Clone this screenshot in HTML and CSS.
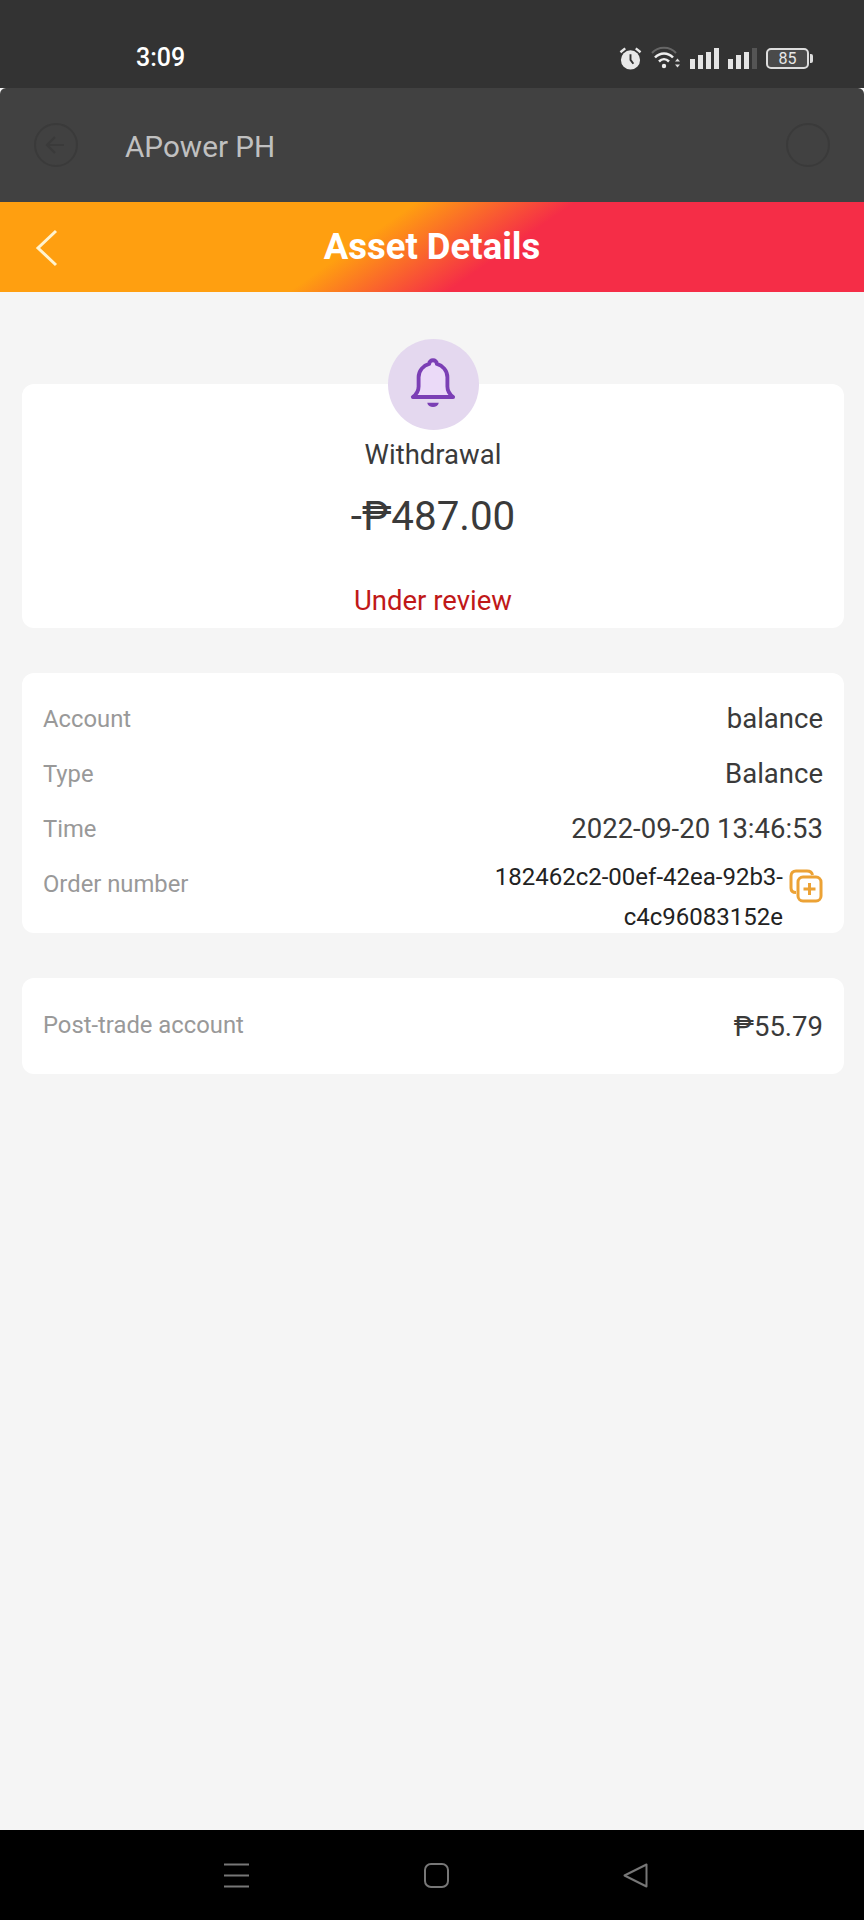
FILE: index.html
```html
<!DOCTYPE html>
<html lang="en">
<head>
    <meta charset="UTF-8">
    <meta name="viewport" content="width=device-width, initial-scale=1.0">
    <title>Asset Details</title>
    <link rel="stylesheet" href="styles.css">
</head>
<body>
    <div class="phone">
        <div class="status-bar">
            <span class="clock">3:09</span>
            <div class="status-icons">
                <svg class="ico-alarm" width="23" height="25" viewBox="0 0 24 26">
                    <circle cx="12" cy="14.500" r="10" fill="#e8e8e8"/>
                    <path d="M12 8.500v6l3 4" fill="none" stroke="#333" stroke-width="2"/>
                    <path d="M1.500 6.500l5-4M22.500 6.500l-5-4" stroke="#e8e8e8" stroke-width="2.500" fill="none"/>
                </svg>
                <svg class="ico-wifi" width="30" height="26" viewBox="0 0 30 26">
                    <path d="M1 8C7 1 19 1 25 8" fill="none" stroke="#666" stroke-width="2"/>
                    <path d="M4 12.500C9 7 17 7 22 12.500" fill="none" stroke="#eee" stroke-width="2.500"/>
                    <path d="M8 16.500C11 13.500 15 13.500 18 16.500" fill="none" stroke="#eee" stroke-width="2.500"/>
                    <circle cx="13" cy="21" r="2.200" fill="#eee"/>
                    <path d="M24 16.500l2.500-3 2.500 3zM24 19.500l2.500 3 2.500-3z" fill="#ddd"/>
                </svg>
                <div class="signal">
                    <i class="h1"></i><i class="h2"></i><i class="h3"></i><i class="h4"></i>
                </div>
                <div class="signal">
                    <i class="h1"></i><i class="h2"></i><i class="h3"></i><i class="h4 off"></i>
                </div>
                <div class="battery">
                    <div class="battery-body">85</div>
                    <div class="battery-tip"></div>
                </div>
            </div>
        </div>

        <div class="app-bar">
            <div class="app-left">
                <svg width="46" height="46" viewBox="0 0 46 46">
                    <circle cx="23" cy="23" r="21" fill="none" stroke="#3a3a3a" stroke-width="2"/>
                    <path d="M31 23H14M22 15l-8 8 8 8" fill="none" stroke="#3a3a3a" stroke-width="2"/>
                </svg>
                <span class="app-name">APower PH</span>
            </div>
            <svg width="46" height="46" viewBox="0 0 46 46">
                <circle cx="23" cy="23" r="21" fill="none" stroke="#3a3a3a" stroke-width="2"/>
            </svg>
        </div>

        <header class="page-head">
            <svg class="back" width="24" height="38" viewBox="0 0 24 38">
                <path d="M21 2L3 19l18 17" fill="none" stroke="#fff3cf" stroke-width="3"/>
            </svg>
            <h1>Asset Details</h1>
        </header>

        <main class="content">
            <section class="card summary">
                <div class="bell-wrap">
                    <svg width="48" height="54" viewBox="0 0 50 56">
                        <path d="M4 40.500h42c-4-3-6-6-6-11V20c0-7-5-12.500-11-14 0-5-8-5-8 0C15 7.500 10 13 10 20v9.500c0 5-2 8-6 11z" fill="#ebdaf8" stroke="#7b3fb5" stroke-width="4" stroke-linejoin="round"/>
                        <path d="M19 46.500h12c-1 6-11 6-12 0z" fill="#7b3fb5"/>
                    </svg>
                </div>
                <div class="kind">Withdrawal</div>
                <div class="amount">-₱487.00</div>
                <div class="state">Under review</div>
            </section>

            <section class="card details">
                <div class="row"><span class="label">Account</span><span class="value">balance</span></div>
                <div class="row"><span class="label">Type</span><span class="value">Balance</span></div>
                <div class="row"><span class="label">Time</span><span class="value">2022-09-20 13:46:53</span></div>
                <div class="row order">
                    <span class="label">Order number</span>
                    <div class="order-value">
                        <span class="order-id">182462c2-00ef-42ea-92b3-<br>c4c96083152e</span>
                        <svg class="copy" width="34" height="34" viewBox="0 0 34 34">
                            <path d="M7 23.500C3.500 23.500 2 21.500 2 19V7c0-3 2-5 5-5h11c3 0 5 1.500 5.500 4" fill="none" stroke="#eca235" stroke-width="3"/>
                            <rect x="9" y="8" width="23" height="24" rx="5" fill="#fff" stroke="#eca235" stroke-width="3"/>
                            <path d="M20.500 14v12M14.500 20h12" stroke="#eca235" stroke-width="3"/>
                        </svg>
                    </div>
                </div>
            </section>

            <section class="card post">
                <span class="label">Post-trade account</span>
                <span class="value">₱55.79</span>
            </section>
        </main>

        <nav class="nav-bar">
            <svg width="25" height="25" viewBox="0 0 25 25">
                <path d="M0 1.500h25M0 12.500h25M0 23.500h25" stroke="#777" stroke-width="2"/>
            </svg>
            <svg width="25" height="25" viewBox="0 0 25 25">
                <rect x="1" y="1" width="23" height="23" rx="6" fill="none" stroke="#777" stroke-width="2"/>
            </svg>
            <svg width="25" height="25" viewBox="0 0 25 25">
                <path d="M1.500 12.500L23.500 1.500v22z" fill="none" stroke="#777" stroke-width="2" stroke-linejoin="round"/>
            </svg>
        </nav>
    </div>
</body>
</html>
```

FILE: styles.css
```css
* {
    box-sizing: border-box;
}

body {
    margin: 0;
    font-family: Roboto, "Liberation Sans", sans-serif;
}

.phone {
    width: 864px;
    height: 1920px;
    display: flex;
    flex-direction: column;
    background-color: #f5f5f5;
    overflow: hidden;
}

.status-bar {
    height: 88px;
    flex: none;
    display: flex;
    justify-content: space-between;
    align-items: flex-end;
    padding: 0 51px 15px 136px;
    background-color: #333333;
}

.clock {
    color: #fff;
    font-size: 25px;
    font-weight: 500;
    line-height: 30px;
}

.status-icons {
    display: flex;
    align-items: center;
    gap: 9px;
    height: 30px;
}

.signal {
    display: flex;
    align-items: flex-end;
    gap: 3px;
    height: 22px;
}

.signal i {
    display: block;
    width: 5px;
    background-color: #e4e4e4;
}

.signal .h1 { height: 10px; }
.signal .h2 { height: 14px; }
.signal .h3 { height: 17px; }
.signal .h4 { height: 21px; }
.signal .off { background-color: #555; }

.battery {
    display: flex;
    align-items: center;
}

.battery-body {
    width: 43px;
    height: 21px;
    border: 2px solid #ddd;
    border-radius: 5px;
    background-color: #4a4a4a;
    color: #e8e8e8;
    font-size: 16px;
    line-height: 17px;
    text-align: center;
}

.battery-tip {
    width: 3px;
    height: 9px;
    margin-left: 1px;
    border-radius: 0 2px 2px 0;
    background-color: #ddd;
}

.app-bar {
    height: 114px;
    flex: none;
    display: flex;
    justify-content: space-between;
    align-items: center;
    padding: 0 33px;
    border-radius: 6px 6px 0 0;
    background-color: #414141;
}

.app-left {
    display: flex;
    align-items: center;
    gap: 46px;
}

.app-name {
    margin-top: 2px;
    color: #c0c0c0;
    font-size: 29.700px;
}

.page-head {
    height: 90px;
    flex: none;
    display: flex;
    align-items: center;
    justify-content: center;
    position: relative;
    background: linear-gradient(145deg, #ff9f10 0%, #ff9f10 42%, #f52d47 58%, #f52d47 100%);
}

.page-head h1 {
    margin: 0 0 2px;
    color: #fff;
    font-size: 36.500px;
    font-weight: 700;
}

.back {
    position: absolute;
    left: 35px;
    top: 27px;
}

.content {
    flex: 1;
    padding: 92px 20px 0 22px;
    display: flex;
    flex-direction: column;
    gap: 45px;
}

.card {
    border-radius: 12px;
    background-color: #fff;
}

.summary {
    height: 244px;
    display: flex;
    flex-direction: column;
    align-items: center;
}

.bell-wrap {
    width: 91px;
    height: 91px;
    margin-top: -45px;
    display: flex;
    align-items: center;
    justify-content: center;
    border-radius: 50%;
    background-color: #e4d8ef;
}

.kind {
    margin-top: 5px;
    color: #3a3a3a;
    font-size: 27.500px;
    line-height: 40px;
}

.amount {
    margin-top: 17px;
    color: #3a3a3a;
    font-size: 40.300px;
    line-height: 50px;
}

.state {
    margin-top: 39px;
    color: #c01818;
    font-size: 27.500px;
    line-height: 40px;
}

.details {
    height: 260px;
    padding: 17px 21px 0;
}

.row {
    height: 55px;
    display: flex;
    justify-content: space-between;
    align-items: center;
}

.order {
    align-items: flex-start;
}

.order .label {
    line-height: 55px;
}

.label {
    color: #999;
    font-size: 23.800px;
}

.details .label {
    margin-top: 2px;
}

.post .label {
    margin-bottom: 2px;
}

.value {
    color: #3a3a3a;
    font-size: 27.500px;
}

.details .value {
    margin-top: 1px;
}

.order-value {
    display: flex;
    align-items: flex-start;
    gap: 6px;
    margin-top: 2px;
}

.order-id {
    color: #222;
    font-size: 24px;
    line-height: 40px;
    text-align: right;
}

.copy {
    margin-top: 12px;
}

.post {
    height: 96px;
    padding: 0 21px;
    display: flex;
    justify-content: space-between;
    align-items: center;
}

.nav-bar {
    height: 90px;
    flex: none;
    display: flex;
    align-items: center;
    padding: 0 216px 0 224px;
    justify-content: space-between;
    background-color: #000;
}
```
